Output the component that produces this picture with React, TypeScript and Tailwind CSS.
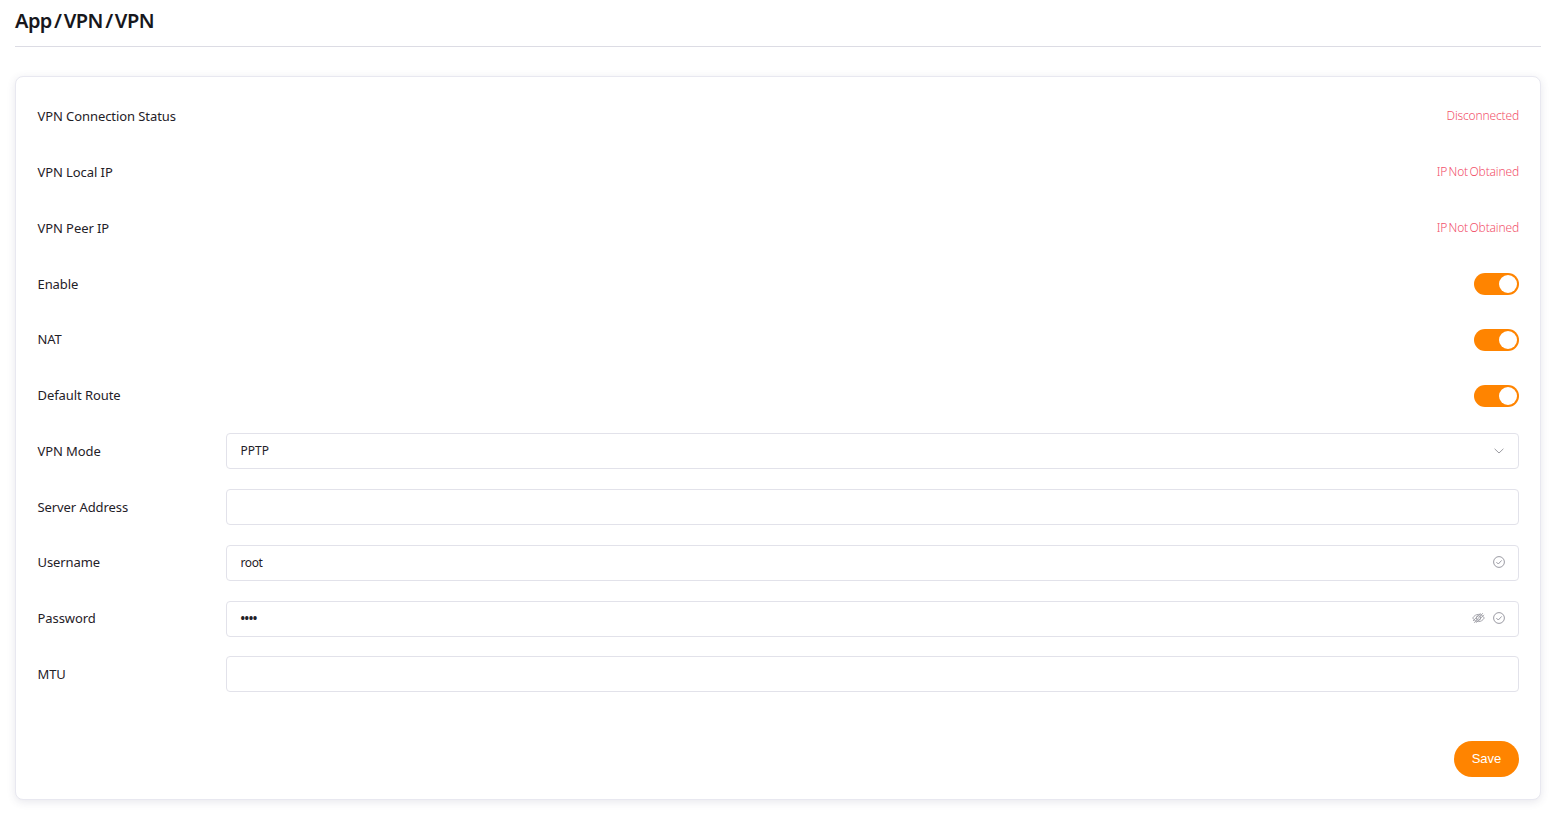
import React from "react";

const font = { fontFamily: '"Noto Sans", sans-serif' };

function Row({ label, children }: { label: string; children: React.ReactNode }) {
  return (
    <div className="flex h-[35.75px] mb-5 items-center">
      <div className="w-[188px] shrink-0 pt-[0.7px] text-[13px] tracking-[-0.08px] text-[#1f2128]">{label}</div>
      <div className="flex-1 flex items-center justify-end min-w-0">{children}</div>
    </div>
  );
}

function Toggle() {
  return (
    <div className="w-[45px] h-[22px] rounded-full bg-[#ff8400] flex items-center justify-end pr-[2px]">
      <div className="w-[18px] h-[18px] rounded-full bg-white" />
    </div>
  );
}

function Box({ children }: { children?: React.ReactNode }) {
  return (
    <div className="w-full h-[36px] border border-[#e2e2ea] rounded-[4px] bg-white flex items-center pl-[14px] pr-[13px] text-[12px] text-[#1f2128]">
      {children}
    </div>
  );
}

function Check() {
  return (
    <svg width="12" height="12" viewBox="0 0 12 12" fill="none" stroke="#8f8f98" strokeWidth="0.9" className="relative -top-px">
      <circle cx="6" cy="6" r="5.4" />
      <path d="M3.4 6.1 5.3 8 8.7 4.4" />
    </svg>
  );
}

function EyeOff() {
  return (
    <svg width="13" height="12" viewBox="0 0 13 12" fill="none" stroke="#9c9ca4" strokeWidth="0.9" className="relative -top-px">
      <path d="M0.7 6C2.2 3.6 4.2 2.4 6.5 2.4S10.8 3.6 12.3 6C10.8 8.4 8.8 9.6 6.5 9.6S2.2 8.4 0.7 6Z" />
      <circle cx="6.5" cy="6" r="2.2" />
      <path d="M2.2 10.8 10.8 1.2M4 10.8 12 2.8M1 9 8.5 1.2" />
    </svg>
  );
}

const Status = ({ children }: { children: React.ReactNode }) => (
  <span className="text-[12px] font-light pt-[0.5px] text-[#f2506a] tracking-[-0.15px] [word-spacing:-1.5px] relative -top-px">{children}</span>
);

export default function App() {
  return (
    <div className="bg-white min-h-[813px] pl-[15px] pr-[17px]" style={font}>
      <div className="h-[47px] border-b border-[#dcdce4] pt-[6px]">
        <h1 className="text-[20px] leading-[30px] font-semibold tracking-[-0.55px] [word-spacing:-2.4px] text-[#17171c]">App / VPN / VPN</h1>
      </div>
      <div className="mt-[29px] h-[724px] border border-[#e8e8f0] rounded-[8px] shadow-[0_2px_8px_rgba(60,60,100,0.12)] bg-white pt-[22px] pl-[21.5px] pr-[21px]">
        <Row label="VPN Connection Status"><Status>Disconnected</Status></Row>
        <Row label="VPN Local IP"><Status>IP Not Obtained</Status></Row>
        <Row label="VPN Peer IP"><Status>IP Not Obtained</Status></Row>
        <Row label="Enable"><Toggle /></Row>
        <Row label="NAT"><Toggle /></Row>
        <Row label="Default Route"><Toggle /></Row>
        <Row label="VPN Mode">
          <Box>
            <span className="flex-1">PPTP</span>
            <svg width="10" height="6" viewBox="0 0 10 6" fill="none" stroke="#8e8e96" strokeWidth="0.9" className="mr-[1px]">
              <path d="M0.6 0.8 5 5 9.4 0.8" />
            </svg>
          </Box>
        </Row>
        <Row label="Server Address"><Box /></Row>
        <Row label="Username">
          <Box>
            <span className="flex-1 tracking-[-0.4px]">root</span>
            <Check />
          </Box>
        </Row>
        <Row label="Password">
          <Box>
            <span className="flex-1 font-bold tracking-[-0.4px]">••••</span>
            <span className="mr-2 flex"><EyeOff /></span>
            <Check />
          </Box>
        </Row>
        <Row label="MTU"><Box /></Row>
        <div className="flex justify-end mt-[49px]">
          <button className="w-[65px] h-[36px] rounded-full bg-[#ff8400] text-white text-[13px] pb-px" style={{ fontFamily: '"Liberation Sans", sans-serif' }}>Save</button>
        </div>
      </div>
    </div>
  );
}
